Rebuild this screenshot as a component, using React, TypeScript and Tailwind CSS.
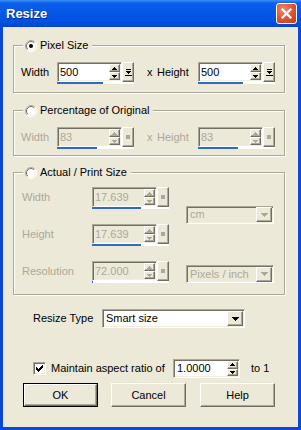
import React from "react";

const sunken =
  "border border-t-[#aca899] border-l-[#aca899] border-r-white border-b-white shadow-[inset_1px_1px_0_#716f64,inset_-1px_-1px_0_#f1efe2]";
const raised =
  "border border-t-white border-l-white border-r-[#716f64] border-b-[#716f64] shadow-[inset_-1px_-1px_0_#aca899] bg-[#ece9d8]";

function Up({ c }: { c: string }) {
  return (
    <svg width="5" height="3" shapeRendering="crispEdges" className="block">
      <path d="M2 0h1v1H2zM1 1h3v1H1zM0 2h5v1H0z" fill={c} />
    </svg>
  );
}
function Down({ c }: { c: string }) {
  return (
    <svg width="5" height="3" shapeRendering="crispEdges" className="block">
      <path d="M0 0h5v1H0zM1 1h3v1H1zM2 2h1v1H2z" fill={c} />
    </svg>
  );
}
function ComboArrow({ c }: { c: string }) {
  return (
    <svg width="7" height="4" shapeRendering="crispEdges" className="block">
      <path d="M0 0h7v1H0zM1 1h5v1H1zM2 2h3v1H2zM3 3h1v1H3z" fill={c} />
    </svg>
  );
}

function SpinArrows({ disabled }: { disabled?: boolean }) {
  const c = disabled ? "#aca899" : "#000";
  return (
    <div className="flex flex-col w-[11px] h-[16px] mr-[1px] shrink-0">
      <div className={`flex-1 flex items-center justify-center ${raised}`}>
        <Up c={c} />
      </div>
      <div className={`flex-1 flex items-center justify-center ${raised}`}>
        <Down c={c} />
      </div>
    </div>
  );
}

function SliderBtn({ disabled }: { disabled?: boolean }) {
  return (
    <div className={`w-[12px] h-[20px] shrink-0 flex items-center justify-center ${raised}`}>
      {disabled ? (
        <div className="w-[4px] h-[4px] bg-[#aca899]" />
      ) : (
        <svg width="7" height="9" shapeRendering="crispEdges" className="block">
          <path d="M1 1h5v1H1zM1 3h5v1H1zM2 4h3v1H2zM3 5h1v1H3zM0 7h7v1H0z" fill="#000" />
        </svg>
      )}
    </div>
  );
}

function SpinEdit({ value, pct, disabled }: { value: string; pct: number; disabled?: boolean }) {
  return (
    <div className="flex flex-col w-[77px]">
      <div className="flex h-[20px]">
        <div
          className={`flex-1 flex items-center ${sunken} ${
            disabled ? "bg-[#ece9d8] text-[#aca899]" : "bg-white text-black"
          }`}
        >
          <span className="flex-1 pl-[2px] text-[11px] leading-none">{value}</span>
          <SpinArrows disabled={disabled} />
        </div>
        <SliderBtn disabled={disabled} />
      </div>
      <div className="h-[2px] flex bg-white">
        <div className="bg-[#316ac5] h-full" style={{ width: `${pct}px` }} />
      </div>
    </div>
  );
}

function Radio({ checked }: { checked?: boolean }) {
  return (
    <svg width="12" height="12" className="block shrink-0">
      <defs>
        <linearGradient id="ro" x1="0" y1="0" x2="1" y2="1">
          <stop offset="0.45" stopColor="#aca899" />
          <stop offset="0.55" stopColor="#ffffff" />
        </linearGradient>
        <linearGradient id="ri" x1="0" y1="0" x2="1" y2="1">
          <stop offset="0.45" stopColor="#716f64" />
          <stop offset="0.55" stopColor="#f1efe2" />
        </linearGradient>
      </defs>
      <circle cx="6" cy="6" r="5.5" fill="white" stroke="url(#ro)" />
      <circle cx="6" cy="6" r="4.5" fill="white" stroke="url(#ri)" />
      {checked && <circle cx="6" cy="6" r="2" fill="#000" />}
    </svg>
  );
}

function Group({
  label,
  checked,
  children,
  className,
}: {
  label: string;
  checked?: boolean;
  children: React.ReactNode;
  className: string;
}) {
  return (
    <div
      className={`relative ml-[10px] w-[272px] border border-[#aca899] shadow-[1px_1px_0_white,inset_1px_1px_0_white] ${className}`}
    >
      <div className="absolute -top-[7px] left-[9px] h-[13px] px-[2px] flex items-center gap-[3px] bg-[#ece9d8]">
        <Radio checked={checked} />
        <span className="text-[11px] leading-none text-black pr-[2px]">{label}</span>
      </div>
      {children}
    </div>
  );
}

function Combo({
  text,
  disabled,
  className,
}: {
  text: string;
  disabled?: boolean;
  className: string;
}) {
  return (
    <div
      className={`flex items-center ${sunken} ${
        disabled ? "bg-[#ece9d8] text-[#aca899]" : "bg-white text-black"
      } ${className}`}
    >
      <span className="flex-1 pl-[3px] text-[11px] leading-none">{text}</span>
      <div className={`w-[16px] h-[15px] mr-[1px] flex items-center justify-center ${raised}`}>
        <ComboArrow c={disabled ? "#aca899" : "#000"} />
      </div>
    </div>
  );
}

function Button({ text, def }: { text: string; def?: boolean }) {
  const inner = (
    <div className={`flex-1 flex items-center justify-center text-[11px] text-black ${raised}`}>
      {text}
    </div>
  );
  return def ? (
    <div className="w-[75px] h-[24px] flex border border-black">{inner}</div>
  ) : (
    <div className="w-[75px] h-[24px] flex">{inner}</div>
  );
}

function PairRow({
  w,
  h,
  pw,
  ph,
  disabled,
}: {
  w: string;
  h: string;
  pw: number;
  ph: number;
  disabled?: boolean;
}) {
  const lc = disabled ? "text-[#aca899]" : "text-black";
  return (
    <div className={`flex items-start pl-[7px] text-[11px] leading-none ${lc}`}>
      <div className="w-[36px] h-[20px] flex items-center">Width</div>
      <SpinEdit value={w} pct={pw} disabled={disabled} />
      <div className="w-[23px] h-[20px] flex items-center pl-[13px]">x</div>
      <div className="w-[41px] h-[20px] flex items-center">Height</div>
      <SpinEdit value={h} pct={ph} disabled={disabled} />
    </div>
  );
}

export default function App() {
  return (
    <div className="w-[301px] h-[430px] flex flex-col bg-[#0a46d8] font-[family-name:'Liberation_Sans',Arial,sans-serif] select-none">
      {/* Title bar */}
      <div className="h-[27px] shrink-0 flex items-center pl-[6px] pr-[4px] bg-[linear-gradient(180deg,#3d8ff8_0px,#0a60ea_3px,#0558e6_12px,#0052e2_22px,#0344cc_27px)]">
        <span className="flex-1 text-white font-bold text-[13px] leading-none [text-shadow:1px_1px_0_#0b2a8a]">
          Resize
        </span>
        <div className="w-[21px] h-[21px] rounded-[3px] border border-white flex items-center justify-center bg-[radial-gradient(circle_at_35%_30%,#f28a6c,#e0502e_55%,#c33a18)]">
          <svg width="11" height="11" className="block">
            <path d="M1.5 1.5l8 8M9.5 1.5l-8 8" stroke="white" strokeWidth="2.2" strokeLinecap="square" />
          </svg>
        </div>
      </div>

      {/* Body */}
      <div className="flex-1 mx-[3px] mb-[3px] bg-[#ece9d8] flex flex-col text-[11px] text-black">
        <Group label="Pixel Size" checked className="mt-[18px] h-[48px] pt-[16px]">
          <PairRow w="500" h="500" pw={46} ph={45} />
        </Group>

        <Group label="Percentage of Original" className="mt-[17px] h-[46px] pt-[16px]">
          <PairRow w="83" h="83" pw={40} ph={40} disabled />
        </Group>

        <Group label="Actual / Print Size" className="mt-[16px] h-[123px] pt-[14px]">
          <div className="grid grid-cols-[70px_94px_88px] gap-y-[15px] pl-[8px] text-[#aca899] leading-none">
            <div className="h-[20px] flex items-center">Width</div>
            <div>
              <SpinEdit value="17.639" pct={49} disabled />
            </div>
            <div className="row-span-2 self-center mb-[4px]">
              <Combo text="cm" disabled className="h-[18px] w-[88px]" />
            </div>
            <div className="h-[20px] flex items-center">Height</div>
            <div>
              <SpinEdit value="17.639" pct={49} disabled />
            </div>
            <div className="h-[20px] flex items-center">Resolution</div>
            <div>
              <SpinEdit value="72.000" pct={1} disabled />
            </div>
            <div className="self-end">
              <Combo text="Pixels / inch" disabled className="h-[18px] w-[88px]" />
            </div>
          </div>
        </Group>

        <div className="mt-[14px] h-[19px] flex items-center pl-[30px]">
          <div className="w-[69px]">Resize Type</div>
          <Combo text="Smart size" className="h-[19px] w-[143px]" />
        </div>

        <div className="mt-[31px] h-[19px] flex items-center pl-[30px]">
          <div className={`w-[13px] h-[13px] bg-white flex items-center justify-center ${sunken}`}>
            <svg width="7" height="7" shapeRendering="crispEdges" className="block">
              <path
                d="M6 0h1v1H6zM5 1h2v1H5zM0 2h1v1H0zM4 2h3v1H4zM0 3h2v1H0zM3 3h3v1H3zM0 4h5v1H0zM1 5h3v1H1zM2 6h1v1H2z"
                fill="#000"
              />
            </svg>
          </div>
          <div className="ml-[5px] w-[122px]">Maintain aspect ratio of</div>
          <div className={`w-[67px] h-[19px] flex items-center bg-white ${sunken}`}>
            <span className="flex-1 pl-[3px] leading-none">1.0000</span>
            <div className="flex flex-col w-[11px] h-[15px] mr-[1px]">
              <div className={`flex-1 flex items-center justify-center ${raised}`}>
                <Up c="#000" />
              </div>
              <div className={`flex-1 flex items-center justify-center ${raised}`}>
                <Down c="#000" />
              </div>
            </div>
          </div>
          <div className="ml-[11px]">to 1</div>
        </div>

        <div className="mt-[5px] flex pl-[20px]">
          <Button text="OK" def />
          <div className="ml-[13px]">
            <Button text="Cancel" />
          </div>
          <div className="ml-[14px]">
            <Button text="Help" />
          </div>
        </div>
      </div>
    </div>
  );
}
